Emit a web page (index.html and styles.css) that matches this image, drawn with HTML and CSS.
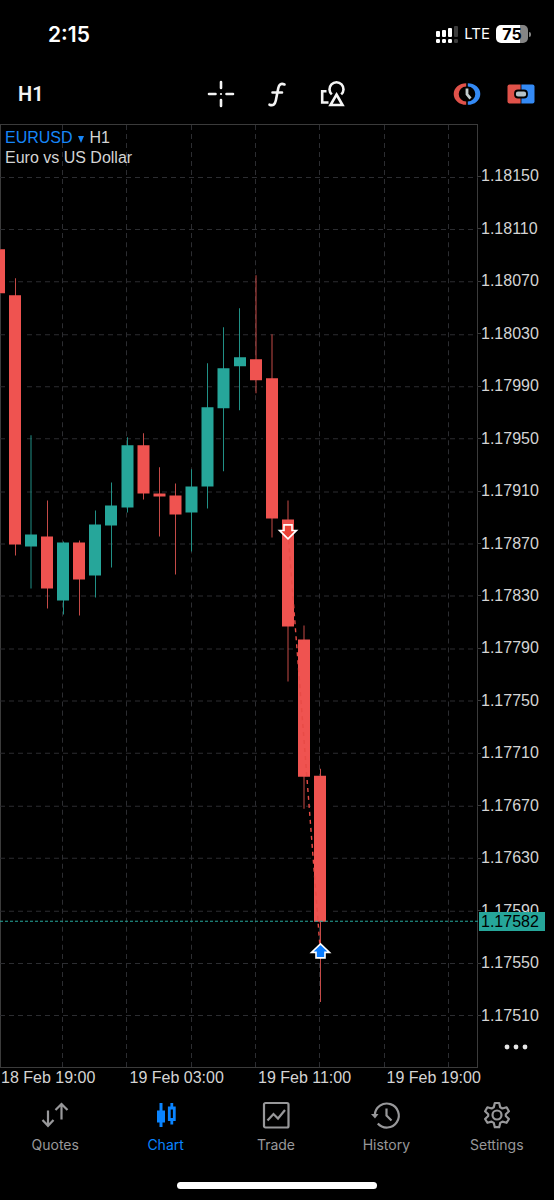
FILE: index.html
```html
<!DOCTYPE html>
<html lang="en">
<head>
<meta charset="utf-8">
<meta name="viewport" content="width=device-width, initial-scale=1">
<title>EURUSD H1</title>
<link rel="stylesheet" href="styles.css">
</head>
<body>
<div class="app">
  <header class="status">
    <time class="clock">2:15</time>
    <div class="status-right">
      <svg class="signal" viewBox="0 0 22 17" aria-hidden="true">
        <g fill="#fff"><rect x="0" y="5" width="4" height="6" rx="1"/><rect x="6" y="4" width="4" height="7" rx="1"/><rect x="12" y="2" width="4" height="9" rx="1"/><rect x="0" y="13" width="4" height="4" rx="1.2"/><rect x="6" y="13" width="4" height="4" rx="1.2"/><rect x="12" y="13" width="4" height="4" rx="1.2"/></g>
        <g fill="#3c3c3c"><rect x="18" y="0" width="4" height="11" rx="1"/><rect x="18" y="13" width="4" height="4" rx="1.2"/></g>
      </svg>
      <span class="network">LTE</span>
      <span class="battery"><span class="battery-level">75</span></span>
    </div>
  </header>

  <div class="toolbar">
    <button class="timeframe" type="button">H1</button>
    <div class="tools">
      <button class="tool" type="button" aria-label="Crosshair">
        <svg viewBox="0 0 28 28" fill="none" stroke="#f4f4f4" stroke-width="2.6" stroke-linecap="round"><path d="M14 2v6M14 20v6M2 14h6.500M19.500 14H26"/><circle cx="14" cy="14" r="1.100" fill="#f4f4f4" stroke="none"/></svg>
      </button>
      <button class="tool" type="button" aria-label="Indicators">
        <svg viewBox="0 0 28 28" fill="none" stroke="#f4f4f4" stroke-width="2.6" stroke-linecap="round" stroke-linejoin="round"><path d="M21.500 4.500C18 3 16 4.500 15.300 8L12.800 20.500C12 24.500 10 26 6.500 24.700M9.500 12.500H19"/></svg>
      </button>
      <button class="tool" type="button" aria-label="Objects">
        <svg viewBox="0 0 28 28" fill="none" stroke="#f4f4f4" stroke-width="2.600"><path d="M7.500 11.200H3.200V22.500H9.500"/><path d="M12.800 14.400A7 7 0 1 1 22.200 14.400"/><path d="M17.500 14.500L23.500 25H11.500Z"/></svg>
      </button>
    </div>
    <div class="trade-tools">
      <button class="tool" type="button" aria-label="Trading sessions">
        <svg viewBox="0 0 28 28"><path d="M13.200 3.200A12.500 10.800 0 0 0 13.200 24.800V21.500A7.500 7.500 0 0 1 13.200 6.500Z" fill="#e0524a"/><path d="M14.800 3.200A12.500 10.800 0 0 1 14.800 24.800V21.500A7.500 7.500 0 0 0 14.800 6.500Z" fill="#348af5"/><path d="M14 8.500V14.300L17.500 18.500" fill="none" stroke="#c3cdcf" stroke-width="2.800"/></svg>
      </button>
      <button class="tool" type="button" aria-label="One-click trading">
        <svg viewBox="0 0 28 28"><path d="M13.600 4.500H2.500Q.5 4.500 .5 6.500V21.500Q.5 23.500 2.500 23.500H13.600Z" fill="#e0524a"/><path d="M14.400 4.500H25.500Q27.500 4.500 27.500 6.500V21.500Q27.500 23.500 25.500 23.500H14.400Z" fill="#348af5"/><rect x="8" y="10.500" width="12" height="7" rx="3" fill="#b5c3c9" stroke="#000" stroke-width="1.800"/></svg>
      </button>
    </div>
  </div>

  <main class="chart">
    <div class="plot">
      <svg class="candles" viewBox="0 124 478 943" preserveAspectRatio="none" role="img" aria-label="EURUSD hourly candles">
        <g class="grid-lines">
          <path d="M62.500 125V1067M126.500 125V1067M191.500 125V1067M255.500 125V1067M319.500 125V1067M384.500 125V1067M448.500 125V1067"/>
          <path d="M0 177.500H478M0 229.500H478M0 281.500H478M0 334.500H478M0 386.500H478M0 438.500H478M0 491.500H478M0 543.500H478M0 595.500H478M0 648.500H478M0 700.500H478M0 752.500H478M0 805.500H478M0 857.500H478M0 910.500H478M0 962.500H478M0 1014.500H478"/>
        </g>
        <g class="gaps">
          <path d="M-1 249V293M15 295V544M31 534V546M47 536V588M63 542V600M79 542V579M95 524V575M111 505V525M127 445V507M143 445V493M175 495V514M191 486V512M207 407V486M223 368V408M239 358V366M256 359V380M272 378V518M288 519V626M304 639V776M320 775V921"/>
        </g>
        <path class="wicks down" d="M15.500 278V555M47.500 500V608M79.500 540V615M143.500 433V499M159.500 467V536M175.500 483V574M256 275V393M272 334V537M288 500V681M304 625V808M320.500 768V1001"/>
        <path class="wicks up" d="M31 435V588M63.500 541V614M95.500 510V597M111.500 482V567M127.500 437V512M191.500 469V551M207.500 363V508M223.500 327V471M239.500 308V410"/>
        <path class="bodies down" d="M-1 249V293M15 295V544M47 536V588M79 542V579M143.500 445V493M159.500 493V496M175.500 495V514M256 359V380M272 378V518M288 519V626M304 639V776M320 775V921"/>
        <path class="bodies up" d="M31 534V546M63 542V600M95 524V575M111 505V525M127.500 445V507M191.500 486V512M207.500 407V486M223.500 368V408M240 357V366"/>
        <path class="bid-line" d="M0 920.500H478"/>
        <path class="trade-line" d="M288 532L320 946"/>
        <path class="marker sell" d="M284 524.500H292V530H296.500L288 538.500L279.500 530H284Z"/>
        <path class="marker buy" d="M316 957V951.500H311.500L320.500 943L329.500 951.500H325V957Z"/>
      </svg>
      <div class="legend">
        <button class="symbol" type="button">EURUSD <svg class="caret" viewBox="0 0 6 7" aria-hidden="true"><path d="M0 0H6L3 7Z"/></svg></button> <span>H1</span>
        <div>Euro vs US Dollar</div>
      </div>
    </div>
    <div class="price-axis">
      <span>1.18150</span><span>1.18110</span><span>1.18070</span><span>1.18030</span><span>1.17990</span><span>1.17950</span><span>1.17910</span><span>1.17870</span><span>1.17830</span><span>1.17790</span><span>1.17750</span><span>1.17710</span><span>1.17670</span><span>1.17630</span><span>1.17590</span><span>1.17550</span><span>1.17510</span>
      <strong class="bid">1.17582</strong>
      <button class="more" type="button" aria-label="More">
        <svg viewBox="0 0 24 6"><circle cx="3" cy="3" r="2.400"/><circle cx="12" cy="3" r="2.400"/><circle cx="21" cy="3" r="2.400"/></svg>
      </button>
    </div>
    <div class="time-axis"><span>18 Feb 19:00</span><span>19 Feb 03:00</span><span>19 Feb 11:00</span><span>19 Feb 19:00</span></div>
  </main>

  <nav class="tabs">
    <a class="tab" href="#quotes">
      <svg viewBox="0 0 28 28"><path d="M7 9.500V24.500M1.500 19L7 24.800L12.500 19M20.500 18.500V3.500M14.500 9L20.500 3L26.500 9"/></svg>Quotes
    </a>
    <a class="tab active" href="#chart" aria-current="page">
      <svg viewBox="0 0 28 28"><path class="solid" d="M7.500 2H10.500V9.500H13V21.500H10.500V26H7.500V21.500H5V9.500H7.500Z"/><path class="heavy" d="M19.800 2V7M19.800 19V23.500"/><path class="heavy" d="M17.300 7H22.300V18.500H17.300Z"/></svg>Chart
    </a>
    <a class="tab" href="#trade">
      <svg viewBox="0 0 28 28"><rect x="2" y="2" width="24.500" height="24.500" rx="1.500"/><path d="M5.500 19.500L11.500 13L16 17.500L23 9"/></svg>Trade
    </a>
    <a class="tab" href="#history">
      <svg viewBox="0 0 28 28"><path d="M2.800 14A12 12 0 1 1 5.800 22.500M14.500 7.500V14.500L19.500 19.500"/><path class="solid" d="M-1 13H6.500L3 17.500Z"/></svg>History
    </a>
    <a class="tab" href="#settings">
      <svg viewBox="0 0 28 28" stroke-linejoin="round"><circle cx="14" cy="14" r="4.500"/><path d="M11.800 2H16.200L17.200 6.200L19.400 7.500L23.600 6.300L25.900 10.200L22.800 13.200V15L25.900 18L23.600 21.800L19.400 20.600L17.200 21.900L16.200 26.200H11.800L10.800 21.900L8.600 20.600L4.400 21.800L2.100 18L5.200 15V13.200L2.100 10.200L4.400 6.300L8.600 7.500L10.800 6.200Z"/></svg>Settings
    </a>
  </nav>
  <div class="home-indicator"></div>
</div>
</body>
</html>
```
FILE: styles.css
```css
* { box-sizing: border-box; }

body {
  margin: 0;
  background: #000;
  color: #d4d4d4;
  font-family: Inter, "Liberation Sans", sans-serif;
}

button {
  padding: 0;
  border: 0;
  background: none;
  color: inherit;
  font: inherit;
}

svg { display: block; }

.app {
  display: flex;
  flex-direction: column;
  min-height: 100vh;
}

.status {
  display: flex;
  justify-content: space-between;
  align-items: center;
  height: 64px;
  padding: 4px 24px 0 48px;
  color: #fff;
}

.clock { font-size: 21px; font-weight: 600; }

.status-right { display: flex; align-items: center; gap: 6px; }

.signal { width: 22px; height: 17px; }

.network {
  font-size: 15px;
  line-height: 18px;
}

.battery {
  position: relative;
  width: 32px;
  height: 18px;
  border-radius: 5px;
  background: linear-gradient(90deg, #fff 75%, #858585 75%);
  margin-right: 2px;
}

.battery::after {
  content: "";
  position: absolute;
  left: 33px;
  top: 7px;
  width: 2px;
  height: 5px;
  border-radius: 0 2px 2px 0;
  background: #858585;
}

.battery-level {
  display: block;
  color: #000;
  font-size: 16px;
  font-weight: 700;
  line-height: 18px;
  text-align: center;
}

.toolbar {
  display: grid;
  grid-template-columns: 1fr auto 1fr;
  align-items: center;
  height: 60px;
  padding: 0 19px 0 18px;
}

.timeframe {
  justify-self: start;
  color: #f4f4f4;
  font-family: Roboto, sans-serif;
  font-size: 20px;
  font-weight: 600;
}

.tools { display: flex; gap: 28px; }
.trade-tools { display: flex; gap: 26px; justify-self: end; }
.tool svg { width: 28px; height: 28px; }

.chart {
  flex: 1;
  display: grid;
  grid-template-columns: 1fr 76px;
  grid-template-rows: 1fr 24px;
  min-height: 480px;
}

.plot {
  position: relative;
  min-height: 0;
  box-shadow: inset 0 0 0 1px #3b3b3b;
}

.candles {
  position: absolute;
  inset: 0;
  width: 100%;
  height: 100%;
}

.candles path { fill: none; }
.grid-lines path { stroke: #2c2d31; stroke-dasharray: 5 4; }
.gaps path { stroke: #000; stroke-width: 18; }
.wicks { stroke-width: 1; }
.wicks.down { stroke: #c44a47; }
.wicks.up { stroke: #219086; }
.bodies { stroke-width: 12; }
.bodies.down { stroke: #ef5350; }
.bodies.up { stroke: #26a69a; }
.bid-line { stroke: #26a69a; stroke-width: 1; stroke-dasharray: 3 2; }
.trade-line { stroke: #e84b46; stroke-width: 1.4; stroke-dasharray: 4 4; }
.candles .marker { stroke: #fff; stroke-width: 1.6; }
.candles .sell { fill: #eb4136; }
.candles .buy { fill: #0a7cff; }

.legend {
  position: absolute;
  left: 5px;
  top: 4px;
  font-family: "Liberation Sans", sans-serif;
  font-size: 16px;
  line-height: 20px;
}

.symbol { color: #1686f8; }
.caret { display: inline-block; width: 6px; height: 7px; margin: 0 1px; fill: #1686f8; }

.price-axis {
  position: relative;
  display: flex;
  flex-direction: column;
  padding: 26px 0;
  font-family: "Liberation Sans", sans-serif;
  font-size: 16px;
}

.price-axis > span {
  flex: 1;
  display: flex;
  align-items: center;
}

.price-axis > span::before {
  content: "";
  width: 3px;
  height: 1px;
  background: #3b3b3b;
}

.bid {
  position: absolute;
  left: 1px;
  right: 9px;
  top: 84.400%;
  margin-top: -9px;
  padding-left: 2px;
  background: #26a69a;
  color: #000;
  font-weight: 400;
  line-height: 19px;
}

.more {
  position: absolute;
  right: 26px;
  bottom: 18px;
}

.more svg { width: 24px; height: 6px; fill: #e6e6e6; }

.time-axis {
  grid-column: 1 / -1;
  display: grid;
  grid-template-columns: repeat(4, 1fr);
  padding-right: 40px;
  font-family: "Liberation Sans", sans-serif;
  font-size: 16px;
  line-height: 20px;
  white-space: nowrap;
}

.time-axis span { padding-left: 1px; }

.tabs {
  display: grid;
  grid-template-columns: repeat(5, 1fr);
  padding: 9px 2px 0 0;
}

.tab {
  display: flex;
  flex-direction: column;
  align-items: center;
  gap: 8px;
  color: #98989a;
  font-size: 14px;
  line-height: 16px;
  text-decoration: none;
}

.tab svg {
  width: 28px;
  height: 28px;
  overflow: visible;
  fill: none;
  stroke: currentColor;
  stroke-width: 2.2;
}

.tab .solid { fill: currentColor; stroke: none; }
.tab .heavy { stroke-width: 2.8; }
.active { color: #0a84ff; }

.home-indicator {
  width: 36%;
  height: 7px;
  margin: 29px auto 11px;
  border-radius: 4px;
  background: #fff;
}
```
